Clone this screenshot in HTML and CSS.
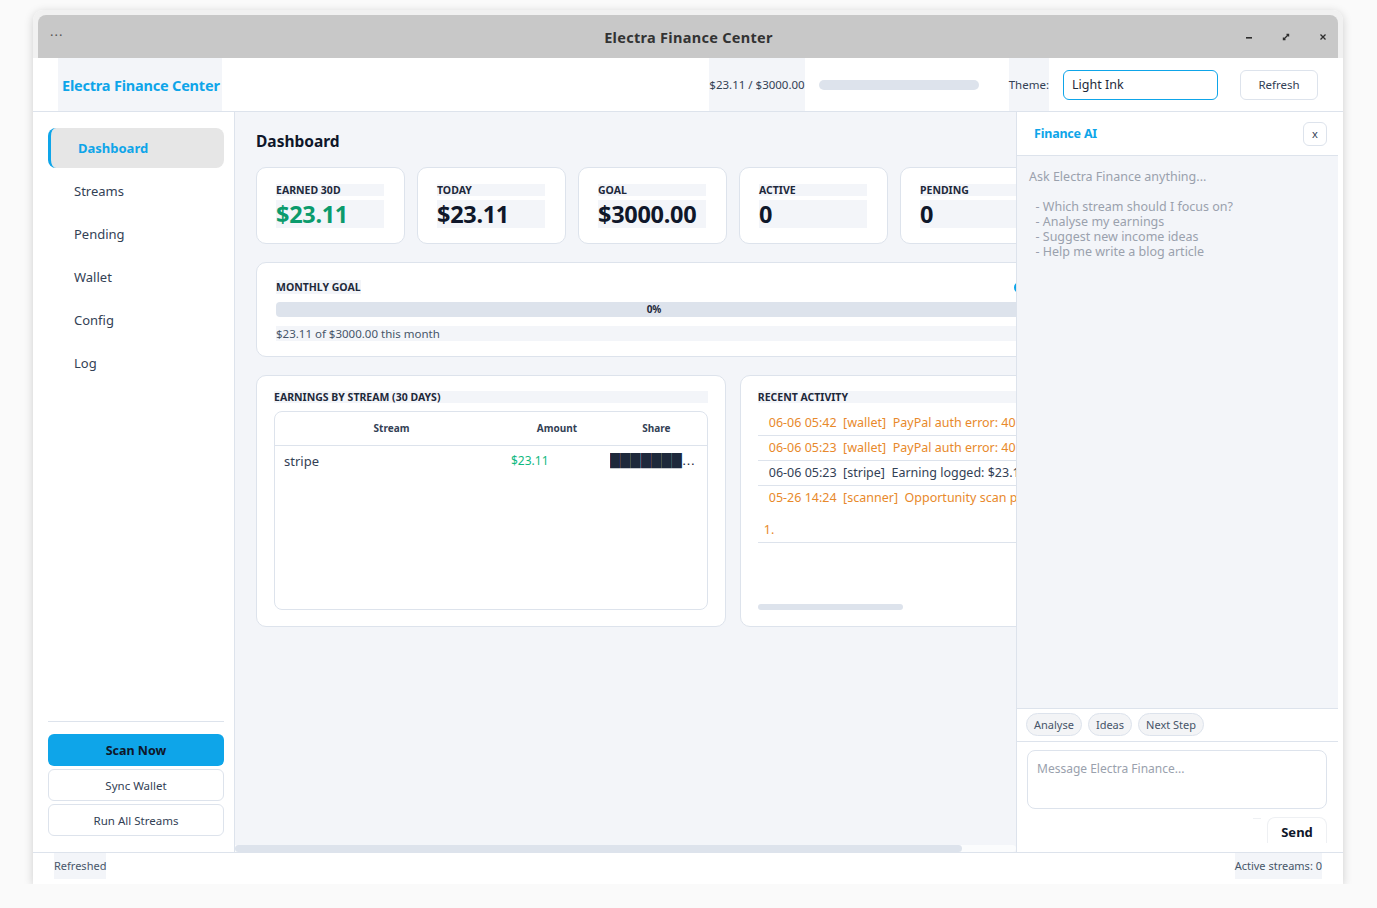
FILE: index.html
```html
<!DOCTYPE html>
<html lang="en">

<head>
    <meta charset="UTF-8">
    <meta name="viewport" content="width=device-width, initial-scale=1.0">
    <title>Electra Finance Center</title>
    <link rel="stylesheet" href="styles.css">
</head>

<body>
    <div class="frame">
        <div class="titlebar-wrap">
            <div class="titlebar">
                <span class="tb-menu">&middot;&middot;&middot;</span>
                <span class="tb-title">Electra Finance Center</span>
                <div class="tb-controls">
                    <svg width="12" height="12" viewBox="0 0 12 12">
                        <rect x="3" y="6" width="6" height="1.6" fill="#2e2e2e" />
                    </svg>
                    <svg width="12" height="12" viewBox="0 0 12 12">
                        <path d="M6.5 3.5h2v2M5.5 8.5h-2v-2" stroke="#2e2e2e" stroke-width="1.4" fill="none" />
                        <path d="M8.5 3.5L3.5 8.5" stroke="#2e2e2e" stroke-width="1.2" />
                    </svg>
                    <svg width="12" height="12" viewBox="0 0 12 12">
                        <path d="M3.5 3.5l5 5M8.5 3.5l-5 5" stroke="#2e2e2e" stroke-width="1.3" />
                    </svg>
                </div>
            </div>
        </div>

        <div class="app">
            <header class="topbar">
                <div class="brand">Electra Finance Center</div>
                <div class="spacer"></div>
                <div class="goal-text">$23.11 / $3000.00</div>
                <div class="mini-progress"></div>
                <div class="theme-label">Theme:</div>
                <input class="theme-input" type="text" value="Light Ink">
                <button class="refresh">Refresh</button>
            </header>

            <div class="middle">
                <aside class="sidebar">
                    <nav class="nav">
                        <div class="nav-item active">Dashboard</div>
                        <div class="nav-item">Streams</div>
                        <div class="nav-item">Pending</div>
                        <div class="nav-item">Wallet</div>
                        <div class="nav-item">Config</div>
                        <div class="nav-item">Log</div>
                    </nav>
                    <div class="side-actions">
                        <button class="btn-primary">Scan Now</button>
                        <button class="btn-outline">Sync Wallet</button>
                        <button class="btn-outline">Run All Streams</button>
                    </div>
                </aside>

                <main class="main">
                    <div class="main-scroll">
                        <div class="content">
                            <h1 class="page-title">Dashboard</h1>

                            <div class="stats">
                                <div class="stat-card">
                                    <div class="stat-label">EARNED 30D</div>
                                    <div class="stat-value green">$23.11</div>
                                </div>
                                <div class="stat-card">
                                    <div class="stat-label">TODAY</div>
                                    <div class="stat-value">$23.11</div>
                                </div>
                                <div class="stat-card">
                                    <div class="stat-label">GOAL</div>
                                    <div class="stat-value">$3000.00</div>
                                </div>
                                <div class="stat-card">
                                    <div class="stat-label">ACTIVE</div>
                                    <div class="stat-value">0</div>
                                </div>
                                <div class="stat-card">
                                    <div class="stat-label">PENDING</div>
                                    <div class="stat-value">0</div>
                                </div>
                            </div>

                            <div class="goal-card">
                                <div class="goal-head">
                                    <span class="card-title">MONTHLY GOAL</span>
                                    <span class="goal-dot"></span>
                                </div>
                                <div class="goal-bar">0%</div>
                                <div class="goal-sub">$23.11 of $3000.00 this month</div>
                            </div>

                            <div class="lower">
                                <div class="panel-card">
                                    <div class="card-title block">EARNINGS BY STREAM (30 DAYS)</div>
                                    <div class="table-box">
                                        <table class="streams">
                                            <thead>
                                                <tr>
                                                    <th class="col-stream">Stream</th>
                                                    <th class="col-amount">Amount</th>
                                                    <th class="col-share">Share</th>
                                                </tr>
                                            </thead>
                                            <tbody>
                                                <tr>
                                                    <td class="col-stream">stripe</td>
                                                    <td class="col-amount amount">$23.11</td>
                                                    <td class="col-share"><div class="share-bar">████████████</div></td>
                                                </tr>
                                            </tbody>
                                        </table>
                                    </div>
                                </div>

                                <div class="panel-card">
                                    <div class="card-title block">RECENT ACTIVITY</div>
                                    <div class="activity">
                                        <div class="act-item warn"><span class="act-line">06-06 05:42  [wallet]  PayPal auth error: 401</span></div>
                                        <div class="act-item warn"><span class="act-line">06-06 05:23  [wallet]  PayPal auth error: 401</span></div>
                                        <div class="act-item"><span class="act-line">06-06 05:23  [stripe]  Earning logged: $23.11</span></div>
                                        <div class="act-item warn">
                                            <div class="act-line">05-26 14:24  [scanner]  Opportunity scan pass</div>
                                            <div class="act-blank"></div>
                                            <div class="act-line act-sub">1.</div>
                                        </div>
                                    </div>
                                    <div class="h-thumb"></div>
                                </div>
                            </div>
                        </div>
                    </div>
                    <div class="h-scroll"><div class="h-scroll-thumb"></div></div>
                </main>

                <section class="ai">
                    <div class="ai-head">
                        <span class="ai-title">Finance AI</span>
                        <button class="ai-close">x</button>
                    </div>
                    <div class="ai-chat">Ask Electra Finance anything...

  - Which stream should I focus on?
  - Analyse my earnings
  - Suggest new income ideas
  - Help me write a blog article</div>
                    <div class="ai-quick">
                        <button class="pill">Analyse</button>
                        <button class="pill">Ideas</button>
                        <button class="pill">Next Step</button>
                    </div>
                    <div class="ai-input">
                        <textarea class="ai-text" placeholder="Message Electra Finance..."></textarea>
                        <div class="send-row">
                            <span class="send-stub"></span>
                            <button class="send">Send</button>
                        </div>
                    </div>
                </section>
            </div>

            <footer class="status">
                <span class="status-text">Refreshed</span>
                <span class="status-text">Active streams: 0</span>
            </footer>
        </div>
    </div>
</body>

</html>
```

FILE: styles.css
```css
* {
    box-sizing: border-box;
}

body {
    margin: 0;
    background-color: #fafafa;
    font-family: 'Noto Sans', 'DejaVu Sans', sans-serif;
    color: #1e293b;
}

button,
input,
textarea {
    font-family: inherit;
}

.frame {
    margin: 10px 0 0 33px;
    width: 1310px;
    height: 874px;
    display: flex;
    flex-direction: column;
    background-color: white;
    border-radius: 10px 10px 0 0;
    box-shadow: 0 2px 10px rgba(0, 0, 0, 0.18);
}

.titlebar-wrap {
    padding: 5px 5px 0;
    background-color: #f1f1f1;
    border-radius: 10px 10px 0 0;
}

.titlebar {
    height: 43px;
    background-color: #c8c8c8;
    border-radius: 8px 8px 0 0;
    display: flex;
    align-items: center;
    padding: 0 9px 0 12px;
}

.tb-menu {
    color: #555;
    font-size: 13px;
    letter-spacing: 1px;
    width: 40px;
    margin-top: -4px;
}

.tb-title {
    flex: 1;
    text-align: center;
    font-weight: bold;
    font-size: 14.5px;
    color: #333;
    letter-spacing: 0.3px;
    padding-left: 44px;
}

.tb-controls {
    display: flex;
    gap: 25px;
    align-items: center;
}

.tb-controls svg {
    display: block;
}

.app {
    flex: 1;
    display: flex;
    flex-direction: column;
    min-height: 0;
}

/* header */
.topbar {
    height: 54px;
    display: flex;
    align-items: stretch;
    border-bottom: 1px solid #dde3ec;
    padding: 0 25px;
}

.brand {
    display: flex;
    align-items: center;
    background-color: #f3f5f9;
    padding: 0 2px 0 4px;
    color: #0ea5e9;
    font-weight: bold;
    font-size: 14.5px;
    letter-spacing: -0.2px;
}

.spacer {
    flex: 1;
}

.goal-text,
.theme-label {
    display: flex;
    align-items: center;
    background-color: #f3f5f9;
    font-size: 11.5px;
    color: #334155;
}

.goal-text {
    margin-right: 14px;
}

.mini-progress {
    align-self: center;
    width: 160px;
    height: 10px;
    border-radius: 5px;
    background-color: #dde3ec;
    margin-right: 30px;
}

.theme-label {
    margin-right: 14px;
}

.theme-input {
    align-self: center;
    width: 155px;
    height: 30px;
    border: 1px solid #0ea5e9;
    border-radius: 6px;
    padding: 0 8px;
    font-size: 12.5px;
    color: #1e293b;
    margin-right: 22px;
    outline: none;
}

.refresh {
    align-self: center;
    width: 78px;
    height: 30px;
    background-color: white;
    border: 1px solid #dde3ec;
    border-radius: 6px;
    font-size: 11.5px;
    color: #334155;
}

/* middle */
.middle {
    flex: 1;
    display: flex;
    min-height: 0;
    padding-right: 5px;
}

.sidebar {
    width: 202px;
    flex-shrink: 0;
    border-right: 1px solid #dde3ec;
    display: flex;
    flex-direction: column;
    justify-content: space-between;
    padding: 16px 10px 16px 15px;
}

.nav {
    display: flex;
    flex-direction: column;
    gap: 3px;
}

.nav-item {
    height: 40px;
    display: flex;
    align-items: center;
    padding-left: 26px;
    font-size: 13px;
    color: #334155;
    border-radius: 8px;
}

.nav-item.active {
    background-color: #e6e6e6;
    border-left: 3px solid #0ea5e9;
    padding-left: 27px;
    color: #0ea5e9;
    font-weight: bold;
}

.side-actions {
    border-top: 1px solid #dde3ec;
    padding-top: 12px;
    display: flex;
    flex-direction: column;
    gap: 3px;
}

.btn-primary,
.btn-outline {
    height: 32px;
    border-radius: 6px;
    font-size: 11.5px;
}

.btn-primary {
    background-color: #0ea5e9;
    border: none;
    font-weight: bold;
    font-size: 12.5px;
    color: #0f172a;
}

.btn-outline {
    background-color: white;
    border: 1px solid #dde3ec;
    color: #334155;
}

/* main */
.main {
    width: 781px;
    flex-shrink: 0;
    background-color: #f3f5f9;
    display: flex;
    flex-direction: column;
    overflow: hidden;
}

.main-scroll {
    flex: 1;
    overflow: hidden;
    padding: 18px 0 0 21px;
}

.content {
    width: 797px;
    display: flex;
    flex-direction: column;
    gap: 18px;
}

.page-title {
    margin: 0 0 -3px;
    font-size: 15.5px;
    line-height: 22px;
    color: #0f172a;
}

.stats {
    display: grid;
    grid-template-columns: repeat(5, 149px);
    gap: 12px;
}

.stat-card {
    height: 77px;
    background-color: white;
    border: 1px solid #dde3ec;
    border-radius: 10px;
    padding: 16px 20px 15px 19px;
}

.stat-label {
    background-color: #f3f5f9;
    font-size: 10.5px;
    line-height: 12px;
    font-weight: bold;
    color: #1e293b;
}

.stat-value {
    margin-top: 4px;
    background-color: #f3f5f9;
    font-size: 23.5px;
    line-height: 28px;
    font-weight: bold;
    color: #0f172a;
    letter-spacing: -0.3px;
}

.stat-value.green {
    color: #0b9b6c;
}

.goal-card {
    height: 95px;
    background-color: white;
    border: 1px solid #dde3ec;
    border-radius: 10px;
    padding: 17px 20px 15px 19px;
}

.goal-head {
    display: flex;
    justify-content: space-between;
    align-items: center;
    height: 14px;
}

.card-title {
    background-color: #f3f5f9;
    font-size: 10.5px;
    line-height: 14px;
    font-weight: bold;
    color: #1e293b;
}

.card-title.block {
    display: block;
    line-height: 12px;
}

.goal-dot {
    width: 12px;
    height: 11px;
    border-radius: 6px;
    background-color: #0ea5e9;
    margin-right: 6px;
}

.goal-bar {
    margin-top: 8px;
    height: 15px;
    border-radius: 4px;
    background-color: #dde3ec;
    text-align: center;
    font-size: 10px;
    line-height: 15px;
    font-weight: bold;
    color: #1e293b;
}

.goal-sub {
    margin-top: 9px;
    background-color: #f3f5f9;
    font-size: 11.5px;
    line-height: 15px;
    color: #475569;
}

.lower {
    display: grid;
    grid-template-columns: minmax(0, 3fr) minmax(0, 2fr);
    gap: 14px;
}

.panel-card {
    height: 252px;
    background-color: white;
    border: 1px solid #dde3ec;
    border-radius: 10px;
    padding: 15px 17px 16px 17px;
    display: flex;
    flex-direction: column;
    overflow: hidden;
    min-width: 0;
}

.table-box {
    margin-top: 8px;
    flex: 1;
    border: 1px solid #dde3ec;
    border-radius: 8px;
    overflow: hidden;
}

.streams {
    width: 100%;
    border-collapse: collapse;
    table-layout: fixed;
}

.streams th {
    height: 33px;
    font-size: 10px;
    font-weight: bold;
    color: #334155;
    text-align: center;
    border-bottom: 1px solid #dde3ec;
    padding: 0;
}

.streams td {
    height: 31px;
    font-size: 13px;
    color: #334155;
    padding: 0;
}

.col-stream {
    width: 233px;
}

.col-amount {
    width: 98px;
}

.streams td.col-stream {
    padding-left: 9px;
}

.streams td.amount {
    color: #10b981;
    font-size: 12px;
    padding-left: 3px;
}

.share-bar {
    width: 95px;
    margin-left: 4px;
    font-family: 'DejaVu Sans', sans-serif;
    font-size: 13px;
    line-height: 16px;
    color: #1e293b;
    white-space: nowrap;
    overflow: hidden;
    text-overflow: ellipsis;
    letter-spacing: 0.3px;
}

.activity {
    margin-top: 8px;
    flex: 1;
    overflow: hidden;
}

.act-item {
    padding: 4px 11px;
    border-bottom: 1px solid #dde3ec;
    font-size: 12.5px;
    line-height: 16px;
    color: #334155;
    white-space: nowrap;
}

.act-line {
    white-space: pre;
}

.act-item.warn {
    color: #e8892b;
}

.act-blank {
    height: 16px;
}

.act-sub {
    margin-left: -5px;
}

.h-thumb {
    width: 145px;
    height: 6px;
    border-radius: 3px;
    background-color: #dde3ec;
}

.h-scroll {
    height: 7px;
    background-color: #fbfcfd;
    border-radius: 0 4px 4px 0;
}

.h-scroll-thumb {
    width: 727px;
    height: 7px;
    border-radius: 4px;
    background-color: #dde3ec;
}

/* AI panel */
.ai {
    width: 322px;
    flex-shrink: 0;
    border-left: 1px solid #dde3ec;
    display: flex;
    flex-direction: column;
    background-color: white;
}

.ai-head {
    height: 44px;
    border-bottom: 1px solid #dde3ec;
    display: flex;
    align-items: center;
    justify-content: space-between;
    padding: 0 11px 0 17px;
}

.ai-title {
    color: #0ea5e9;
    font-weight: bold;
    font-size: 12.5px;
    letter-spacing: -0.2px;
}

.ai-close {
    width: 24px;
    height: 24px;
    background-color: white;
    border: 1px solid #dde3ec;
    border-radius: 6px;
    font-size: 11px;
    color: #334155;
    padding: 0;
}

.ai-chat {
    flex: 1;
    background-color: #f3f5f9;
    padding: 13px 12px;
    white-space: pre;
    font-size: 12.5px;
    line-height: 15px;
    color: #9aa1ad;
}

.ai-quick {
    height: 34px;
    border-top: 1px solid #dde3ec;
    border-bottom: 1px solid #dde3ec;
    display: flex;
    align-items: center;
    gap: 6px;
    padding: 0 0 2px 9px;
}

.pill {
    height: 23px;
    padding: 0 7px;
    background-color: #f3f4f6;
    border: 1px solid #dde3ec;
    border-radius: 12px;
    font-size: 11px;
    color: #475569;
}

.ai-input {
    height: 110px;
    padding: 8px 11px 0 10px;
}

.ai-text {
    display: block;
    width: 100%;
    height: 59px;
    border: 1px solid #dde3ec;
    border-radius: 8px;
    resize: none;
    padding: 9px 9px;
    font-size: 12px;
    outline: none;
}

.ai-text::placeholder {
    color: #9aa1ad;
}

.send-row {
    display: flex;
    justify-content: flex-end;
    align-items: flex-start;
    gap: 6px;
    margin-top: 8px;
}

.send-stub {
    width: 8px;
    height: 1px;
    margin-top: 1px;
    background-color: #eef0f3;
}

.send {
    width: 60px;
    height: 26px;
    background: none;
    border: 1px solid #eef0f3;
    border-bottom: none;
    border-radius: 8px 8px 0 0;
    font-weight: bold;
    font-size: 13px;
    color: #0f172a;
    padding: 2px 0 0;
}

/* status */
.status {
    height: 32px;
    border-top: 1px solid #dde3ec;
    display: flex;
    justify-content: space-between;
    align-items: flex-start;
    padding: 0 21px;
}

.status-text {
    background-color: #f3f5f9;
    height: 26px;
    line-height: 26px;
    font-size: 11px;
    color: #475569;
}
```
